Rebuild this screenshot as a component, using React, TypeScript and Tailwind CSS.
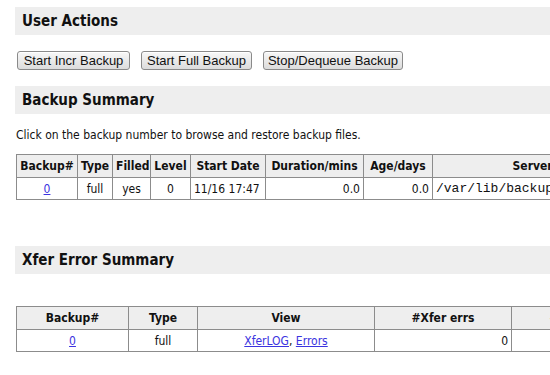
import React from 'react';

const sans = { fontFamily: '"DejaVu Sans Condensed", "DejaVu Sans", Tahoma, sans-serif' };

function SectionHead({ title }: { title: string }) {
  return (
    <div className="h-[28px] bg-[#eeeeee] pl-[7px] flex items-center text-[15px] font-bold text-[#111]">
      {title}
    </div>
  );
}

function Btn({ label, w }: { label: string; w: string }) {
  return (
    <button
      className={`${w} h-[19px] rounded-[3px] border border-[#8a8a8a] bg-gradient-to-b from-[#f8f8f8] to-[#dcdcdc] text-[13px] leading-none text-[#111] shadow-[inset_0_1px_0_#fff]`}
      style={{ fontFamily: '"Liberation Sans", Arial, sans-serif' }}
    >
      {label}
    </button>
  );
}

const th = 'border border-[#8c8c8c] bg-[#eeeeee] px-[3px] h-[23px] text-[12px] font-bold whitespace-nowrap';
const td = 'border border-[#8c8c8c] px-[3px] h-[22px] text-[12px] whitespace-nowrap';
const link = 'text-[#3b34e0] underline';

export default function App() {
  return (
    <div className="w-[550px] h-[375px] overflow-hidden bg-white text-[#111]" style={sans}>
      <div className="w-[900px] pl-[15px] pt-[7px]">
        <SectionHead title="User Actions" />

        <div className="flex gap-[11px] pl-[2px] mt-[16px]">
          <Btn label="Start Incr Backup" w="w-[113px]" />
          <Btn label="Start Full Backup" w="w-[111px]" />
          <Btn label="Stop/Dequeue Backup" w="w-[140px]" />
        </div>

        <div className="mt-[16px]">
          <SectionHead title="Backup Summary" />
        </div>

        <p className="text-[12px] mt-[14px] pl-[1px] leading-[14px]">
          Click on the backup number to browse and restore backup files.
        </p>

        <table className="table-fixed w-[696px] border-collapse border border-[#5a5a5a] ml-[1px] mt-[12px]">
          <thead>
            <tr>
              <th className={`${th} w-[61px]`}>Backup#</th>
              <th className={`${th} w-[35px]`}>Type</th>
              <th className={`${th} w-[38px]`}>Filled</th>
              <th className={`${th} w-[40px]`}>Level</th>
              <th className={`${th} w-[75px]`}>Start Date</th>
              <th className={`${th} w-[98px]`}>Duration/mins</th>
              <th className={`${th} w-[69px]`}>Age/days</th>
              <th className={`${th} w-[280px]`}>Server Backup Path</th>
            </tr>
          </thead>
          <tbody>
            <tr>
              <td className={`${td} text-center`}><a className={link} href="#">0</a></td>
              <td className={`${td} text-center`}>full</td>
              <td className={`${td} text-center`}>yes</td>
              <td className={`${td} text-center`}>0</td>
              <td className={`${td} text-left`}>11/16 17:47</td>
              <td className={`${td} text-right`}>0.0</td>
              <td className={`${td} text-right`}>0.0</td>
              <td className={`${td} text-left text-[13px]`} style={{ fontFamily: '"Liberation Mono", "Courier New", monospace' }}>
                /var/lib/backuppc/pc/localhost/0
              </td>
            </tr>
          </tbody>
        </table>

        <div className="mt-[46px]">
          <SectionHead title="Xfer Error Summary" />
        </div>

        <table className="table-fixed w-[769px] border-collapse border border-[#5a5a5a] ml-[1px] mt-[32px]">
          <thead>
            <tr>
              <th className={`${th} w-[112px]`}>Backup#</th>
              <th className={`${th} w-[69px]`}>Type</th>
              <th className={`${th} w-[177px]`}>View</th>
              <th className={`${th} w-[137px]`}>#Xfer errs</th>
              <th className={`${th} w-[137px]`}>#bad files</th>
              <th className={`${th} w-[137px]`}>#bad share</th>
            </tr>
          </thead>
          <tbody>
            <tr>
              <td className={`${td} text-center`}><a className={link} href="#">0</a></td>
              <td className={`${td} text-center`}>full</td>
              <td className={`${td} text-center`}>
                <a className={link} href="#">XferLOG</a>, <a className={link} href="#">Errors</a>
              </td>
              <td className={`${td} text-right`}>0</td>
              <td className={`${td} text-right`}>0</td>
              <td className={`${td} text-right`}>0</td>
            </tr>
          </tbody>
        </table>
      </div>
    </div>
  );
}
